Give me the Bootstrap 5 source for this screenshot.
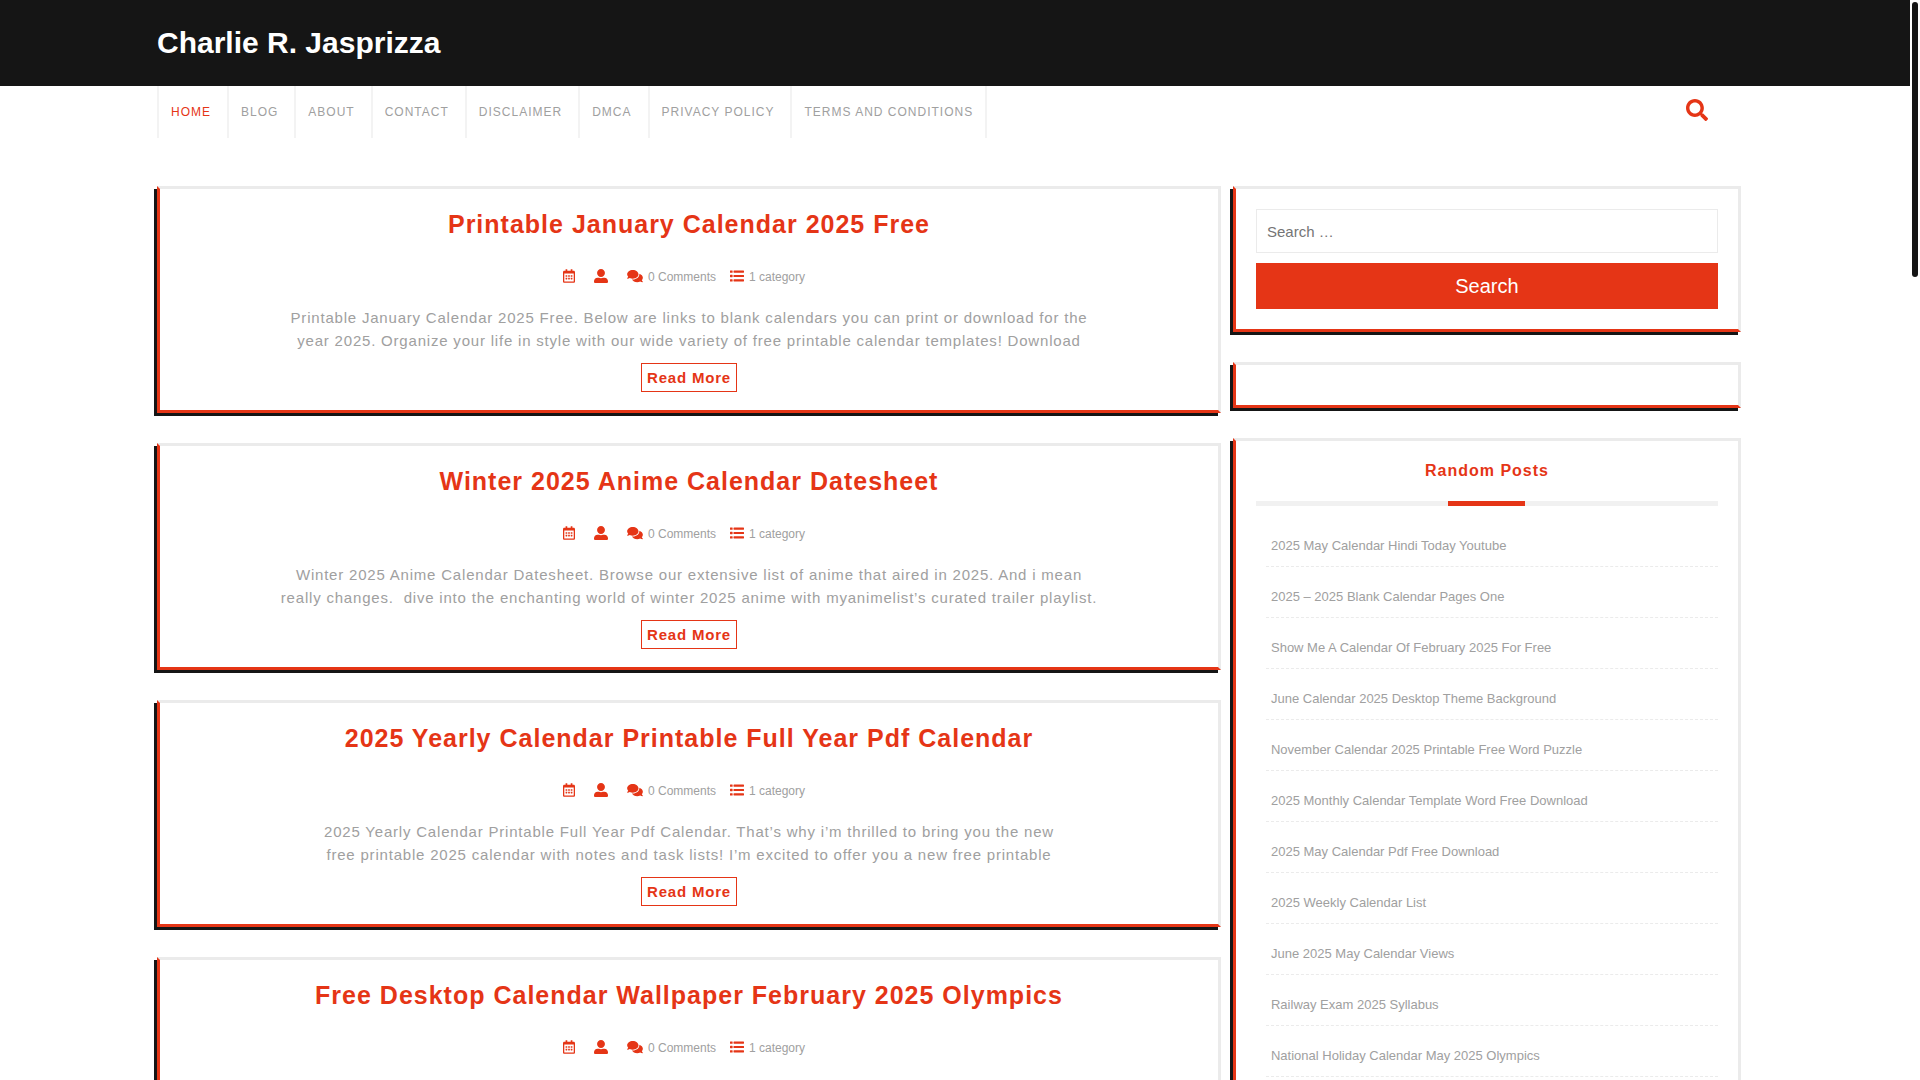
<!DOCTYPE html>
<html lang="en">
<head>
<meta charset="utf-8">
<meta name="viewport" content="width=device-width, initial-scale=1">
<title>Charlie R. Jasprizza</title>
<link href="https://cdn.jsdelivr.net/npm/bootstrap@5.3.0/dist/css/bootstrap.min.css" rel="stylesheet">
<style>
:root { --accent: #e53516; --ink: #151515; --rule: #ebebeb; --soft: #a0a0a0; }
body { font-family: "Liberation Sans", Arial, sans-serif; font-size: 15px; color: var(--soft); background: #fff; }
a { text-decoration: none; }
.page-wrap { max-width: 1596px; }
.scroll-rail { width: 10px; }
.scroll-thumb { width: 6px; height: 275px; border-radius: 3px; background: var(--ink); margin: 2px; }
.site-head { background: var(--ink); }
.site-title { font-size: 30px; line-height: 36px; padding: 25px 0; margin: 0; font-weight: 700; }
.site-title a { color: #fff; }
.menu-item { border-left: 2px solid #f3f3f3; padding-right: 4px; }
.menu-item:last-child { border-right: 2px solid #f3f3f3; padding-right: 0; }
.menu-item a { display: block; padding: 16px 12px; font-size: 12px; line-height: 20px; letter-spacing: 1px; text-transform: uppercase; color: var(--soft); }
.menu-item a.active { color: var(--accent); }
.search-toggle { width: 22px; height: 22px; margin: 13px 45px 0 0; color: var(--accent); }
.framed { border: 3px solid var(--rule); border-left-color: var(--accent); border-bottom-color: var(--accent); box-shadow: -3px 3px 0 var(--ink); margin-bottom: 30px; padding: 20px; }
.post { padding: 16px 100px 18px; text-align: center; letter-spacing: 0.05rem; line-height: 23px; }
.post-title { font-size: 25px; line-height: 38px; letter-spacing: 1px; font-weight: 700; margin: 0 0 22px; }
.post-title a, .more-link { color: var(--accent); }
.post-meta { font-size: 12px; line-height: 24px; letter-spacing: 0; margin-bottom: 17px; padding-right: 10px; }
.post-meta svg { height: 14px; fill: var(--accent); margin: 0 5px 2px 0; }
.post-meta .solo { margin-right: 19px; }
.post-meta .list-icon { margin-left: 14px; }
.post-text { max-width: 820px; margin-bottom: 11px; }
.more-link { border: 1px solid var(--accent); padding: 2px 5px; font-weight: 700; line-height: 23px; }
.widget-col { padding: 0 12px; }
.search-box { height: 44px; border: 1px solid var(--rule); padding: 0 10px; margin-bottom: 10px; font-size: 15px; color: #757575; }
.search-box::placeholder { color: #757575; }
.search-btn { height: 46px; background: var(--accent); color: #fff; font-size: 20px; line-height: 30px; }
.widget-title { font-size: 16px; line-height: 20px; letter-spacing: 1px; font-weight: 700; color: var(--accent); margin: 0 0 20px; }
.title-bar { height: 5px; background: #f1f1f1; margin-bottom: 10px; }
.title-bar span { width: 16.6667%; background: var(--accent); }
.post-list { padding-left: 10px; }
.post-list li { border-bottom: 1px dashed var(--rule); padding: 20px 5px 10px; line-height: 20px; font-size: 13px; }
.post-list a { color: var(--soft); }
</style>
</head>
<body>
<svg class="d-none" aria-hidden="true">
  <symbol id="i-cal" viewBox="0 0 448 512"><path d="M148 288h-40c-6.600 0-12-5.400-12-12v-40c0-6.600 5.400-12 12-12h40c6.600 0 12 5.400 12 12v40c0 6.600-5.400 12-12 12zm108-12v-40c0-6.600-5.400-12-12-12h-40c-6.600 0-12 5.400-12 12v40c0 6.600 5.400 12 12 12h40c6.600 0 12-5.400 12-12zm96 0v-40c0-6.600-5.400-12-12-12h-40c-6.600 0-12 5.400-12 12v40c0 6.600 5.400 12 12 12h40c6.600 0 12-5.400 12-12zm-96 96v-40c0-6.600-5.400-12-12-12h-40c-6.600 0-12 5.400-12 12v40c0 6.600 5.400 12 12 12h40c6.600 0 12-5.400 12-12zm-96 0v-40c0-6.600-5.400-12-12-12h-40c-6.600 0-12 5.400-12 12v40c0 6.600 5.400 12 12 12h40c6.600 0 12-5.400 12-12zm192 0v-40c0-6.600-5.400-12-12-12h-40c-6.600 0-12 5.400-12 12v40c0 6.600 5.400 12 12 12h40c6.600 0 12-5.400 12-12zm96-260v352c0 26.500-21.500 48-48 48H48c-26.500 0-48-21.500-48-48V112c0-26.500 21.500-48 48-48h48V12c0-6.600 5.400-12 12-12h40c6.600 0 12 5.400 12 12v52h128V12c0-6.600 5.400-12 12-12h40c6.600 0 12 5.400 12 12v52h48c26.500 0 48 21.500 48 48zm-48 346V160H48v298c0 3.300 2.700 6 6 6h340c3.300 0 6-2.700 6-6z"/></symbol>
  <symbol id="i-user" viewBox="0 0 512 512"><path d="M256 288c79.500 0 144-64.500 144-144S335.500 0 256 0 112 64.500 112 144s64.500 144 144 144zm128 32h-55.100c-22.200 10.200-46.900 16-72.900 16s-50.600-5.800-72.900-16H128C57.300 320 0 377.300 0 448v16c0 26.500 21.500 48 48 48h416c26.500 0 48-21.500 48-48v-16c0-70.700-57.300-128-128-128z"/></symbol>
  <symbol id="i-talk" viewBox="0 0 576 512"><path d="M416 192c0-88.400-93.100-160-208-160S0 103.600 0 192c0 34.300 14.100 65.900 38 92-13.400 30.200-35.500 54.200-35.800 54.500-2.200 2.300-2.800 5.700-1.500 8.700S4.800 352 8 352c36.600 0 66.900-12.300 88.700-25 32.200 15.700 70.300 25 111.300 25 114.900 0 208-71.600 208-160zm122 220c23.900-26 38-57.700 38-92 0-66.900-53.500-124.200-129.300-148.100.9 6.600 1.300 13.300 1.300 20.100 0 105.900-107.700 192-240 192-10.800 0-21.300-.8-31.700-1.900C207.800 439.600 281.800 480 368 480c41 0 79.100-9.200 111.300-25 21.800 12.700 52.100 25 88.700 25 3.200 0 6.100-1.900 7.300-4.800 1.300-2.900.7-6.300-1.500-8.700-.3-.3-22.400-24.200-35.800-54.500z"/></symbol>
  <symbol id="i-list" viewBox="0 0 512 512"><path d="M16 52h64a16 16 0 0 1 16 16v56a16 16 0 0 1-16 16H16a16 16 0 0 1-16-16V68a16 16 0 0 1 16-16zm0 160h64a16 16 0 0 1 16 16v56a16 16 0 0 1-16 16H16a16 16 0 0 1-16-16v-56a16 16 0 0 1 16-16zm0 160h64a16 16 0 0 1 16 16v56a16 16 0 0 1-16 16H16a16 16 0 0 1-16-16v-56a16 16 0 0 1 16-16zM144 56h352a16 16 0 0 1 16 16v48a16 16 0 0 1-16 16H144a16 16 0 0 1-16-16V72a16 16 0 0 1 16-16zm0 160h352a16 16 0 0 1 16 16v48a16 16 0 0 1-16 16H144a16 16 0 0 1-16-16v-48a16 16 0 0 1 16-16zm0 160h352a16 16 0 0 1 16 16v48a16 16 0 0 1-16 16H144a16 16 0 0 1-16-16v-48a16 16 0 0 1 16-16z"/></symbol>
</svg>
<div class="d-flex vh-100 overflow-hidden">
  <div class="flex-grow-1 overflow-hidden">
    <header>
      <div class="site-head">
        <div class="page-wrap mx-auto"><h1 class="site-title"><a href="#">Charlie R. Jasprizza</a></h1></div>
      </div>
      <div class="page-wrap mx-auto d-flex justify-content-between align-items-start mb-5">
        <nav aria-label="Main">
          <ul class="list-unstyled d-flex flex-wrap mb-0">
            <li class="menu-item"><a class="active" href="#">Home</a></li>
            <li class="menu-item"><a href="#">Blog</a></li>
            <li class="menu-item"><a href="#">About</a></li>
            <li class="menu-item"><a href="#">Contact</a></li>
            <li class="menu-item"><a href="#">Disclaimer</a></li>
            <li class="menu-item"><a href="#">DMCA</a></li>
            <li class="menu-item"><a href="#">Privacy Policy</a></li>
            <li class="menu-item"><a href="#">Terms and Conditions</a></li>
          </ul>
        </nav>
        <button class="search-toggle btn p-0 border-0 d-flex" type="button" aria-label="Open search">
          <svg width="22" height="22" viewBox="0 0 512 512" fill="currentColor"><path d="M505 442.700L405.300 343c-4.500-4.500-10.600-7-17-7H372c27.600-35.300 44-79.700 44-128C416 93.100 322.900 0 208 0S0 93.100 0 208s93.100 208 208 208c48.300 0 92.700-16.400 128-44v16.300c0 6.400 2.500 12.500 7 17l99.700 99.700c9.400 9.400 24.600 9.400 33.900 0l28.300-28.300c9.400-9.400 9.400-24.600.1-34zM208 336c-70.700 0-128-57.200-128-128 0-70.700 57.200-128 128-128 70.700 0 128 57.200 128 128 0 70.700-57.200 128-128 128z"/></svg>
        </button>
      </div>
    </header>
    <div class="page-wrap mx-auto">
      <div class="row gx-0">
        <main class="col-lg-8">
          <article class="framed post">
            <h2 class="post-title"><a href="#">Printable January Calendar 2025 Free</a></h2>
            <div class="post-meta d-flex justify-content-center align-items-center">
              <svg class="solo" width="12"><use href="#i-cal"/></svg>
              <svg class="solo" width="14"><use href="#i-user"/></svg>
              <svg width="16"><use href="#i-talk"/></svg><span>0 Comments</span>
              <svg class="list-icon" width="14"><use href="#i-list"/></svg><span>1 category</span>
            </div>
            <p class="post-text mx-auto">Printable January Calendar 2025 Free. Below are links to blank calendars you can print or download for the year 2025. Organize your life in style with our wide variety of free printable calendar templates! Download</p>
            <a class="more-link d-inline-block" href="#">Read More</a>
          </article>
          <article class="framed post">
            <h2 class="post-title"><a href="#">Winter 2025 Anime Calendar Datesheet</a></h2>
            <div class="post-meta d-flex justify-content-center align-items-center">
              <svg class="solo" width="12"><use href="#i-cal"/></svg>
              <svg class="solo" width="14"><use href="#i-user"/></svg>
              <svg width="16"><use href="#i-talk"/></svg><span>0 Comments</span>
              <svg class="list-icon" width="14"><use href="#i-list"/></svg><span>1 category</span>
            </div>
            <p class="post-text mx-auto">Winter 2025 Anime Calendar Datesheet. Browse our extensive list of anime that aired in 2025. And i mean really changes.&nbsp; dive into the enchanting world of winter 2025 anime with myanimelist’s curated trailer playlist.</p>
            <a class="more-link d-inline-block" href="#">Read More</a>
          </article>
          <article class="framed post">
            <h2 class="post-title"><a href="#">2025 Yearly Calendar Printable Full Year Pdf Calendar</a></h2>
            <div class="post-meta d-flex justify-content-center align-items-center">
              <svg class="solo" width="12"><use href="#i-cal"/></svg>
              <svg class="solo" width="14"><use href="#i-user"/></svg>
              <svg width="16"><use href="#i-talk"/></svg><span>0 Comments</span>
              <svg class="list-icon" width="14"><use href="#i-list"/></svg><span>1 category</span>
            </div>
            <p class="post-text mx-auto">2025 Yearly Calendar Printable Full Year Pdf Calendar. That’s why i’m thrilled to bring you the new<br>free printable 2025 calendar with notes and task lists! I’m excited to offer you a new free printable</p>
            <a class="more-link d-inline-block" href="#">Read More</a>
          </article>
          <article class="framed post">
            <h2 class="post-title"><a href="#">Free Desktop Calendar Wallpaper February 2025 Olympics</a></h2>
            <div class="post-meta d-flex justify-content-center align-items-center">
              <svg class="solo" width="12"><use href="#i-cal"/></svg>
              <svg class="solo" width="14"><use href="#i-user"/></svg>
              <svg width="16"><use href="#i-talk"/></svg><span>0 Comments</span>
              <svg class="list-icon" width="14"><use href="#i-list"/></svg><span>1 category</span>
            </div>
          </article>
        </main>
        <aside class="col-lg-4 widget-col">
          <section class="framed">
            <form role="search">
              <label class="visually-hidden" for="q">Search for:</label>
              <input class="search-box d-block w-100" id="q" type="search" placeholder="Search …">
              <button class="search-btn btn rounded-0 border-0 w-100" type="button">Search</button>
            </form>
          </section>
          <section class="framed"></section>
          <section class="framed">
            <h3 class="widget-title text-center">Random Posts</h3>
            <div class="title-bar d-flex justify-content-center"><span></span></div>
            <ul class="post-list list-unstyled mb-0">
              <li><a href="#">2025 May Calendar Hindi Today Youtube</a></li>
              <li><a href="#">2025 – 2025 Blank Calendar Pages One</a></li>
              <li><a href="#">Show Me A Calendar Of February 2025 For Free</a></li>
              <li><a href="#">June Calendar 2025 Desktop Theme Background</a></li>
              <li><a href="#">November Calendar 2025 Printable Free Word Puzzle</a></li>
              <li><a href="#">2025 Monthly Calendar Template Word Free Download</a></li>
              <li><a href="#">2025 May Calendar Pdf Free Download</a></li>
              <li><a href="#">2025 Weekly Calendar List</a></li>
              <li><a href="#">June 2025 May Calendar Views</a></li>
              <li><a href="#">Railway Exam 2025 Syllabus</a></li>
              <li><a href="#">National Holiday Calendar May 2025 Olympics</a></li>
            </ul>
          </section>
        </aside>
      </div>
    </div>
  </div>
  <div class="scroll-rail flex-shrink-0" aria-hidden="true"><div class="scroll-thumb"></div></div>
</div>
<script src="https://cdn.jsdelivr.net/npm/bootstrap@5.3.0/dist/js/bootstrap.bundle.min.js"></script>
</body>
</html>
